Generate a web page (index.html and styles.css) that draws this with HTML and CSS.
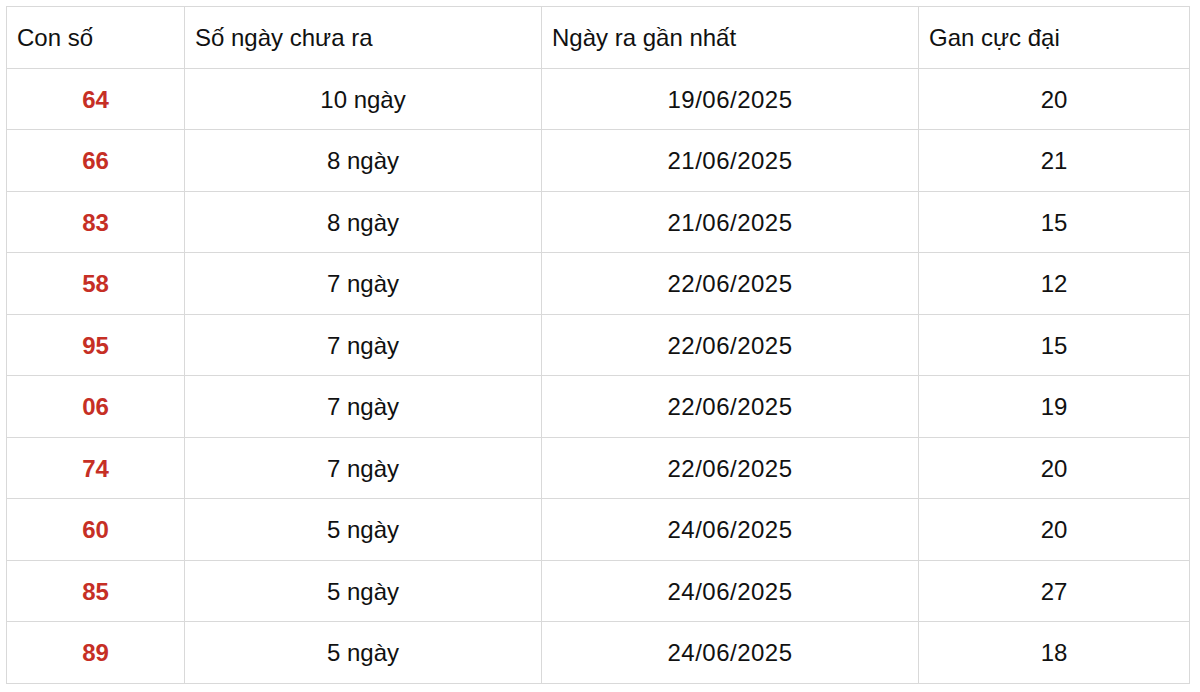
FILE: index.html
```html
<!DOCTYPE html>
<html lang="vi">
<head>
<meta charset="utf-8">
<link rel="stylesheet" href="styles.css">
</head>
<body>
<table class="gan-table">
  <colgroup>
    <col class="c1"><col class="c2"><col class="c3"><col class="c4">
  </colgroup>
  <thead>
    <tr><th>Con số</th><th>Số ngày chưa ra</th><th>Ngày ra gần nhất</th><th>Gan cực đại</th></tr>
  </thead>
  <tbody>
    <tr><td class="num">64</td><td>10 ngày</td><td class="date">19/06/2025</td><td>20</td></tr>
    <tr><td class="num">66</td><td>8 ngày</td><td class="date">21/06/2025</td><td>21</td></tr>
    <tr><td class="num">83</td><td>8 ngày</td><td class="date">21/06/2025</td><td>15</td></tr>
    <tr><td class="num">58</td><td>7 ngày</td><td class="date">22/06/2025</td><td>12</td></tr>
    <tr><td class="num">95</td><td>7 ngày</td><td class="date">22/06/2025</td><td>15</td></tr>
    <tr><td class="num">06</td><td>7 ngày</td><td class="date">22/06/2025</td><td>19</td></tr>
    <tr><td class="num">74</td><td>7 ngày</td><td class="date">22/06/2025</td><td>20</td></tr>
    <tr><td class="num">60</td><td>5 ngày</td><td class="date">24/06/2025</td><td>20</td></tr>
    <tr><td class="num">85</td><td>5 ngày</td><td class="date">24/06/2025</td><td>27</td></tr>
    <tr><td class="num">89</td><td>5 ngày</td><td class="date">24/06/2025</td><td>18</td></tr>
  </tbody>
</table>
</body>
</html>
```
FILE: styles.css
```css
html, body {
  margin: 0;
  background: #ffffff;
}
body {
  padding: 6px 6px 0 6px;
  font-family: "Liberation Sans", Arial, sans-serif;
  color: #111111;
}
.gan-table {
  width: 1183px;
  border-collapse: collapse;
  table-layout: fixed;
  font-size: 24px;
}
.c1 { width: 178px; }
.c2 { width: 357px; }
.c3 { width: 377px; }
.c4 { width: 271px; }
.gan-table th,
.gan-table td {
  border: 1.5px solid #d9d9d9;
  height: 61.5px;
  padding: 2px 10px 0 10px;
  box-sizing: border-box;
  vertical-align: middle;
}
.gan-table th {
  text-align: left;
  font-weight: normal;
  padding-top: 1px;
}
.gan-table td {
  text-align: center;
}
.gan-table td.date {
  letter-spacing: 0.5px;
}
.gan-table td.num {
  color: #c62f25;
  font-weight: bold;
}
```
